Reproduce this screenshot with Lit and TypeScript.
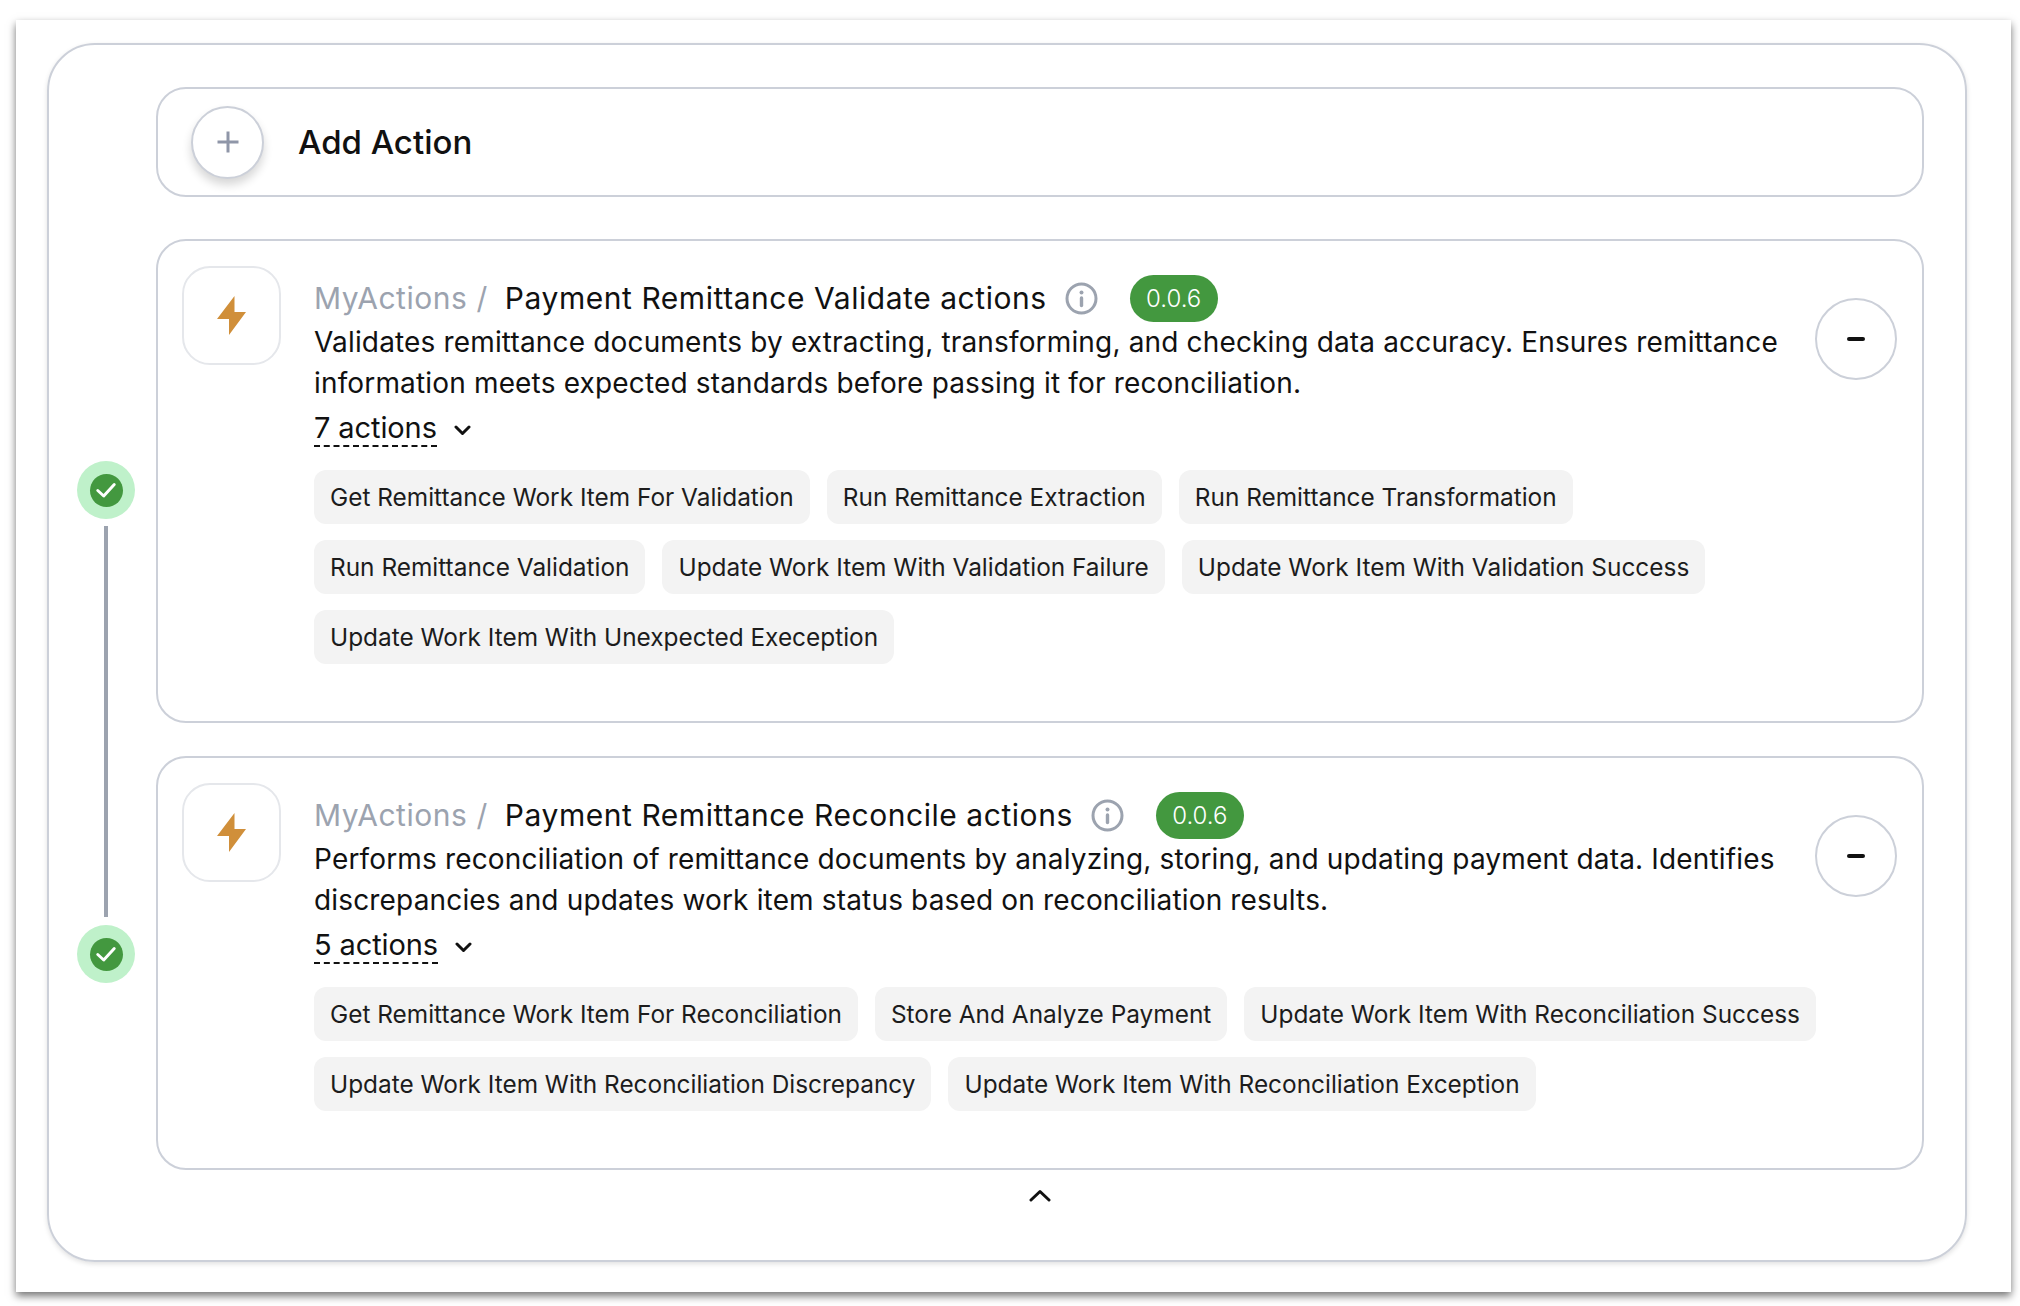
import { LitElement, html, css } from "lit";
import { customElement } from "lit/decorators.js";

const check = html`<svg width="24" height="24" viewBox="0 0 24 24" fill="none"><path d="M3 12.5 9.5 18.5 21 6" stroke="#fff" stroke-width="3.2" stroke-linecap="round" stroke-linejoin="round"/></svg>`;
const bolt = html`<svg width="29" height="39" viewBox="0 0 29 39"><polygon points="17.5,0 0,23 12,23 12,39 29,16 17.5,16" fill="#d08f3a"/></svg>`;
const info = html`<svg width="33" height="33" viewBox="0 0 33 33" fill="none"><circle cx="16.5" cy="16.5" r="14.5" stroke="#9ca3af" stroke-width="3"/><circle cx="16.5" cy="10.5" r="2" fill="#9ca3af"/><path d="M16.5 16v7.5" stroke="#9ca3af" stroke-width="3.4" stroke-linecap="round"/></svg>`;
const chevDown = html`<svg width="17" height="11" viewBox="0 0 17 11" fill="none"><path d="M2 2l6.5 6.5L15 2" stroke="#111" stroke-width="3" stroke-linecap="round" stroke-linejoin="round"/></svg>`;
const chevUp = html`<svg width="22" height="13" viewBox="0 0 22 13" fill="none"><path d="M2 11 11 2.5 20 11" stroke="#111" stroke-width="3" stroke-linecap="round" stroke-linejoin="round"/></svg>`;

interface Card {
  name: string;
  desc: string;
  count: string;
  chips: string[];
}

const cards: Card[] = [
  {
    name: "Payment Remittance Validate actions",
    desc: "Validates remittance documents by extracting, transforming, and checking data accuracy. Ensures remittance information meets expected standards before passing it for reconciliation.",
    count: "7 actions",
    chips: [
      "Get Remittance Work Item For Validation",
      "Run Remittance Extraction",
      "Run Remittance Transformation",
      "Run Remittance Validation",
      "Update Work Item With Validation Failure",
      "Update Work Item With Validation Success",
      "Update Work Item With Unexpected Exeception",
    ],
  },
  {
    name: "Payment Remittance Reconcile actions",
    desc: "Performs reconciliation of remittance documents by analyzing, storing, and updating payment data. Identifies discrepancies and updates work item status based on reconciliation results.",
    count: "5 actions",
    chips: [
      "Get Remittance Work Item For Reconciliation",
      "Store And Analyze Payment",
      "Update Work Item With Reconciliation Success",
      "Update Work Item With Reconciliation Discrepancy",
      "Update Work Item With Reconciliation Exception",
    ],
  },
];

@customElement("app-root")
export class AppRoot extends LitElement {
  static styles = css`
    :host {
      display: block;
      height: 1306px;
      background: #fff;
      font-family: Inter, "Liberation Sans", sans-serif;
      color: #111;
      overflow: hidden;
    }
    .sheet {
      box-sizing: border-box;
      margin: 20px 0 0 16px;
      width: 1995px;
      height: 1272px;
      padding: 23px 44px 32px 31px;
      background: #fff;
      box-shadow: 0 4px 8px rgba(0, 0, 0, 0.55);
    }
    .outer {
      box-sizing: border-box;
      height: 1219px;
      display: flex;
      border: 2px solid #ccd0d9;
      border-radius: 48px;
      padding: 42px 41px 0 0;
      box-shadow: 0 2px 5px rgba(0, 0, 0, 0.12);
    }
    .timeline {
      box-sizing: border-box;
      width: 107px;
      flex: none;
      padding: 374px 0 0 7px;
      display: flex;
      flex-direction: column;
      align-items: center;
    }
    .step {
      width: 58px;
      height: 58px;
      border-radius: 50%;
      background: #bff1ca;
      display: flex;
      align-items: center;
      justify-content: center;
      flex: none;
    }
    .step-in {
      width: 33px;
      height: 33px;
      border-radius: 50%;
      background: #43983f;
      display: flex;
      align-items: center;
      justify-content: center;
    }
    .step-in svg {
      width: 22px;
      height: 22px;
    }
    .line {
      width: 4px;
      height: 391px;
      margin: 7px 0 8px;
      background: #9ca3af;
    }
    .main {
      flex: 1;
      min-width: 0;
    }
    .add {
      box-sizing: border-box;
      height: 110px;
      display: flex;
      align-items: center;
      gap: 34px;
      padding-left: 33px;
      border: 2px solid #ccd0d9;
      border-radius: 30px;
      margin-bottom: 42px;
    }
    .plus {
      box-sizing: border-box;
      width: 73px;
      height: 73px;
      border-radius: 50%;
      border: 2px solid #ccd0d9;
      background: #fff;
      box-shadow: 0 6px 10px rgba(0, 0, 0, 0.16);
      display: flex;
      align-items: center;
      justify-content: center;
    }
    .add-label {
      font-size: 33px;
      font-weight: 500;
    }
    .card {
      box-sizing: border-box;
      display: flex;
      gap: 33px;
      border: 2px solid #ccd0d9;
      border-radius: 30px;
      padding: 25px 25px 57px 24px;
      margin-bottom: 33px;
    }
    .card:last-of-type {
      margin-bottom: 0;
    }
    .icon {
      box-sizing: border-box;
      width: 99px;
      height: 99px;
      flex: none;
      border: 2px solid #e5e7eb;
      border-radius: 28px;
      display: flex;
      align-items: center;
      justify-content: center;
    }
    .body {
      flex: 1;
      min-width: 0;
      padding-top: 8px;
    }
    .head {
      display: flex;
      align-items: center;
      justify-content: space-between;
      gap: 24px;
    }
    .text {
      flex: 1;
      min-width: 0;
    }
    .title {
      height: 48px;
      display: flex;
      align-items: center;
      font-size: 30px;
      white-space: nowrap;
      letter-spacing: 0.55px;
    }
    .crumb {
      color: #9ca3af;
      margin-right: 17px;
    }
    .name {
      margin-right: 18px;
      font-weight: 400;
    }
    .info {
      display: flex;
      margin-right: 32px;
    }
    .badge {
      box-sizing: border-box;
      width: 88px;
      height: 47px;
      border-radius: 24px;
      background: #43983f;
      color: #fff;
      font-size: 24px;
      font-weight: 300;
      letter-spacing: 0;
      display: flex;
      align-items: center;
      justify-content: center;
    }
    .desc {
      font-size: 28px;
      line-height: 41px;
      letter-spacing: 0.16px;
      color: #111;
    }
    .minus {
      box-sizing: border-box;
      width: 82px;
      height: 82px;
      flex: none;
      border-radius: 50%;
      border: 2px solid #ccd0d9;
      display: flex;
      align-items: center;
      justify-content: center;
    }
    .minus i {
      display: block;
      width: 18px;
      height: 4px;
      background: #111;
      border-radius: 2px;
    }
    .count {
      display: flex;
      align-items: center;
      gap: 17px;
      height: 41px;
      margin-top: 4px;
      font-size: 29px;
      letter-spacing: -0.1px;
    }
    .count span {
      border-bottom: 2px dashed #111;
      line-height: 35px;
    }
    .count svg {
      margin-top: 3px;
    }
    .chips {
      display: flex;
      flex-wrap: wrap;
      column-gap: 17px;
      row-gap: 16px;
      margin-top: 21px;
    }
    .chip {
      height: 54px;
      padding: 0 16px;
      display: flex;
      align-items: center;
      background: #f3f3f3;
      border-radius: 12px;
      font-size: 24.4px;
      color: #1c1c1c;
      white-space: nowrap;
    }
    .collapse {
      display: flex;
      justify-content: center;
      padding-top: 19px;
    }
  `;

  renderCard(c: Card) {
    return html`<section class="card">
      <div class="icon">${bolt}</div>
      <div class="body">
        <div class="head">
          <div class="text">
            <div class="title">
              <span class="crumb">MyActions /</span>
              <span class="name">${c.name}</span>
              <span class="info">${info}</span>
              <span class="badge">0.0.6</span>
            </div>
            <div class="desc">${c.desc}</div>
          </div>
          <div class="minus"><i></i></div>
        </div>
        <div class="count"><span>${c.count}</span>${chevDown}</div>
        <div class="chips">${c.chips.map((t) => html`<div class="chip">${t}</div>`)}</div>
      </div>
    </section>`;
  }

  render() {
    return html`<div class="sheet">
      <div class="outer">
        <div class="timeline">
          <div class="step"><div class="step-in">${check}</div></div>
          <div class="line"></div>
          <div class="step"><div class="step-in">${check}</div></div>
        </div>
        <div class="main">
          <div class="add">
            <div class="plus">
              <svg width="24" height="24" viewBox="0 0 24 24" fill="none"><path d="M12 1.5v21M1.5 12h21" stroke="#8f96a8" stroke-width="3"/></svg>
            </div>
            <div class="add-label">Add Action</div>
          </div>
          ${cards.map((c) => this.renderCard(c))}
          <div class="collapse">${chevUp}</div>
        </div>
      </div>
    </div>`;
  }
}
